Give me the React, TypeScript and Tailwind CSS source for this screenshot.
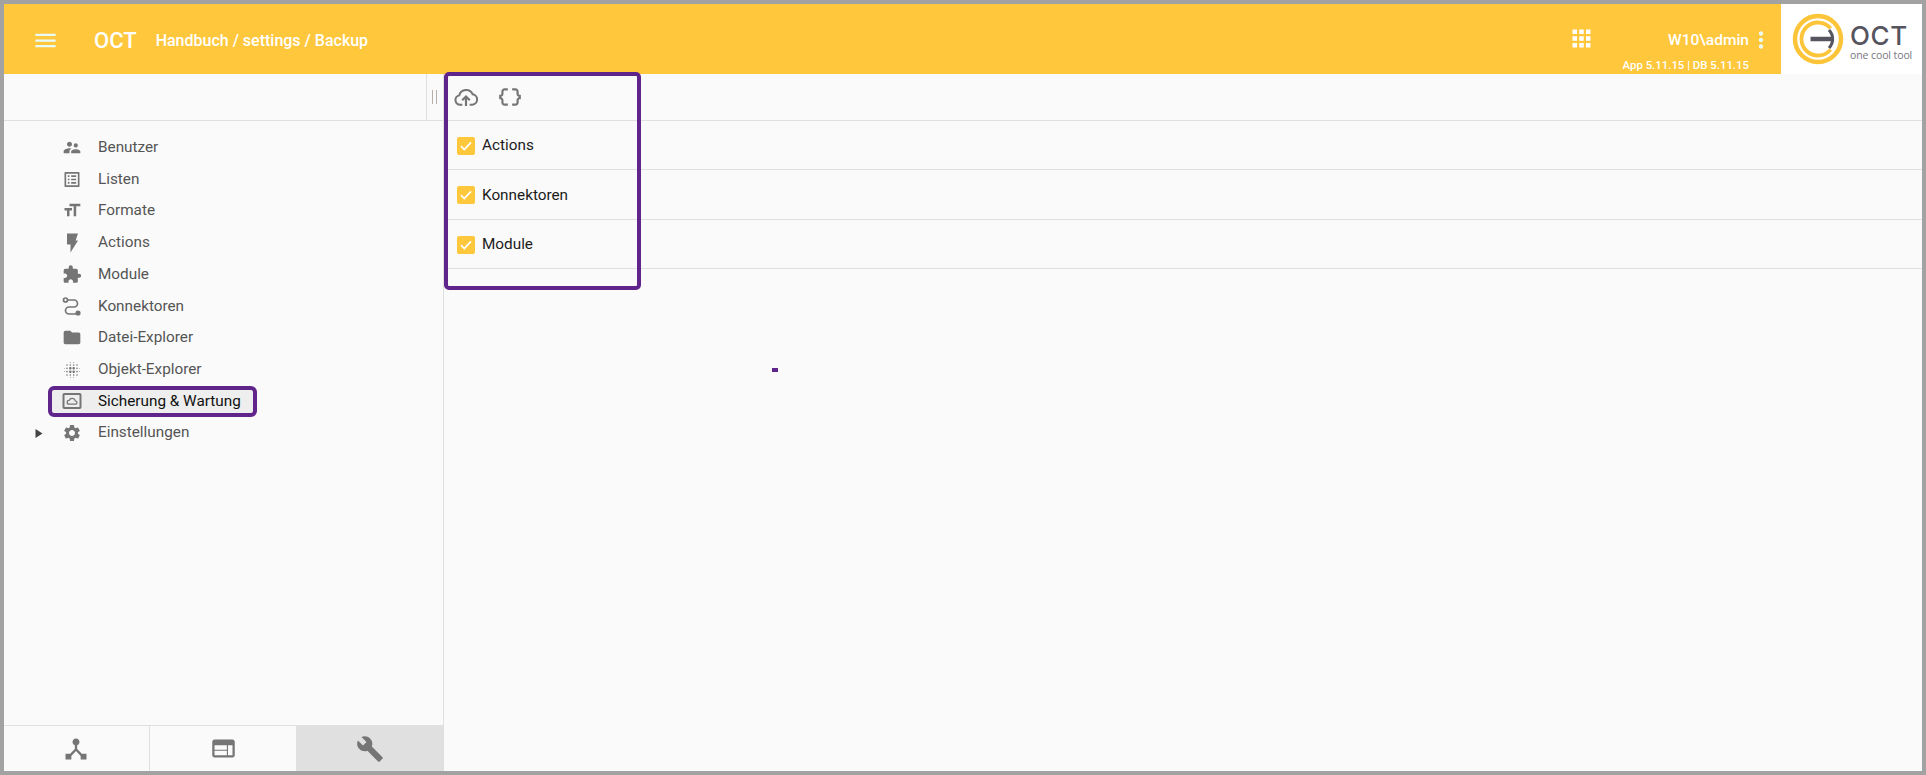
import React from "react";
import {
  MdMenu, MdApps, MdMoreVert, MdSupervisorAccount, MdOutlineListAlt, MdFormatSize, MdExtension,
  MdFolder, MdBlurOn, MdSettings, MdDeviceHub, MdWeb, MdBuild, MdDataObject,
} from "react-icons/md";

function BackupIcon() {
  return (
    <svg width="20" height="20" viewBox="0 0 20 20" fill="none" stroke="#757575">
      <rect x="1.5" y="3" width="17" height="14" rx="0.8" strokeWidth="2" />
      <path d="M7 13.2h6.2a1.7 1.7 0 0 0 .1-3.4 3.3 3.3 0 0 0-6.2-.4 1.9 1.9 0 0 0-.1 3.8z" strokeWidth="1.3" />
    </svg>
  );
}

function FlashIcon() {
  return (
    <svg width="13" height="20" viewBox="0 0 13 20" fill="#757575">
      <path d="M1 0.5H12L9.6 7.5H12L4.5 19.5V11.5H1Z" />
    </svg>
  );
}

function ConnectorIcon() {
  return (
    <svg width="20" height="19" viewBox="0 0 20 19" fill="none" stroke="#757575" strokeWidth="1.7">
      <circle cx="3.5" cy="3" r="2" />
      <path d="M5.5 3H12a3.5 3.5 0 0 1 0 7H7a3.5 3.5 0 0 0 0 7h7" />
      <circle cx="16" cy="16" r="2.6" fill="#757575" stroke="none" />
    </svg>
  );
}

function CloudUploadIcon() {
  return (
    <svg width="24" height="20" viewBox="0 0 26 22" fill="none" stroke="#757575" strokeWidth="2.2">
      <path d="M9 19.5H6.5a5.2 5.2 0 0 1-.9-10.3A7.8 7.8 0 0 1 20.3 8a5.8 5.8 0 0 1-.3 11.5H17" />
      <path d="M13 21V10.5M8.8 14.6l4.2-4.2 4.2 4.2" strokeWidth="2.4" />
    </svg>
  );
}

function Logo() {
  return (
    <div className="flex w-[141px] h-full bg-white items-center pl-[11px]">
      <svg width="52" height="52" viewBox="0 0 52 52" fill="none" className="shrink-0">
        <circle cx="26" cy="26" r="23" stroke="#fcc439" strokeWidth="4.5" />
        <path d="M38.6 15.4A16.5 16.5 0 1 0 38.6 36.6" stroke="#fcc439" strokeWidth="3.8" />
        <path d="M18.5 26H42" stroke="#55545f" strokeWidth="4.5" />
        <path d="M37 17a13 13 0 0 1 0 18" stroke="#55545f" strokeWidth="3" />
      </svg>
      <div className="ml-[6px] mt-[5px] flex flex-col items-start">
        <span className="font-['Inter',sans-serif] text-[26px] leading-[27px] tracking-[0.6px] font-medium text-[#55545f]">OCT</span>
        <span className="mt-[1px] font-['Open_Sans',sans-serif] text-[10.5px] leading-[11px] whitespace-nowrap tracking-[-0.1px] text-[#777680]">one cool tool</span>
      </div>
    </div>
  );
}

const items: { label: string; icon: React.ReactNode; active?: boolean; arrow?: boolean }[] = [
  { label: "Benutzer", icon: <MdSupervisorAccount size={25} /> },
  { label: "Listen", icon: <MdOutlineListAlt size={25} /> },
  { label: "Formate", icon: <MdFormatSize size={29} /> },
  { label: "Actions", icon: <FlashIcon /> },
  { label: "Module", icon: <MdExtension size={27} /> },
  { label: "Konnektoren", icon: <ConnectorIcon /> },
  { label: "Datei-Explorer", icon: <MdFolder size={27} /> },
  { label: "Objekt-Explorer", icon: <MdBlurOn size={26} /> },
  { label: "Sicherung & Wartung", icon: <BackupIcon />, active: true },
  { label: "Einstellungen", icon: <MdSettings size={28} />, arrow: true },
];

function SideItem({ label, icon, active, arrow }: (typeof items)[number]) {
  return (
    <div
      className={
        active
          ? "relative flex items-center h-[31.75px] ml-[44px] w-[209px] pl-[10px] border-[4px] border-[#5f258a] rounded-[6px] bg-[#eeeeee] text-[#111111]"
          : "relative flex items-center h-[31.75px] ml-[44px] pl-[14px] text-[#555555]"
      }
    >
      {arrow && (
        <svg width="8" height="9" viewBox="0 0 8 9" fill="#444444" className="absolute left-[-13px]">
          <path d="M0.5 0 7.5 4.5 0.5 9Z" />
        </svg>
      )}
      <span className="w-[20px] h-[24px] flex items-center justify-center shrink-0 text-[#757575]">{icon}</span>
      <span className={arrow ? "ml-[16px] -mt-[1px] text-[15.3px] whitespace-nowrap" : "ml-[16px] text-[15.3px] whitespace-nowrap"}>{label}</span>
    </div>
  );
}

function CheckRow({ label, h }: { label: string; h: string }) {
  return (
    <div className={`flex items-center ${h} border-b border-[#e0e0e0] pl-[13px] pt-[1px]`}>
      <span className="w-[18px] h-[18px] rounded-[2px] bg-[#ffc73c] flex items-center justify-center">
        <svg width="12" height="10" viewBox="0 0 12 10" fill="none" stroke="#ffffff" strokeWidth="1.7">
          <path d="M1 5.2 4.3 8.5 11 1.3" />
        </svg>
      </span>
      <span className="ml-[7px] text-[15.3px] text-[#1c1c1c]">{label}</span>
    </div>
  );
}

export default function App() {
  return (
    <div className="w-[1926px] h-[775px] box-border border-4 border-[#a2a2a2] bg-[#fafafa] flex flex-col font-['Roboto',sans-serif] overflow-hidden">
      <header className="h-[70px] shrink-0 bg-[#ffc73c] flex items-center text-white">
        <MdMenu size={27} className="ml-[28px] mt-[2px] text-[#e9fbf7]" />
        <span className="ml-[35px] mt-[3px] text-[22px] font-medium leading-none">OCT</span>
        <span className="ml-[19px] mt-[3px] text-[16px] font-medium whitespace-nowrap">Handbuch / settings / Backup</span>
        <div className="flex-1" />
        <MdApps size={27} className="mr-[22px] -mt-[1px]" />
        <div className="flex flex-col items-end self-start pt-[25px] w-[132px] mr-[32px] relative">
          <span className="text-[15.5px] leading-[22px] font-medium whitespace-nowrap">W10\admin</span>
          <MdMoreVert size={26} className="absolute right-[-25px] top-[23px] text-[#e9fbf7]" />
          <span className="mt-[7px] text-[11.4px] leading-[14px] font-medium whitespace-nowrap">App 5.11.15 | DB 5.11.15</span>
        </div>
        <Logo />
      </header>

      <div className="relative flex-1 flex min-h-0">
        <aside className="w-[440px] shrink-0 border-r border-[#e0e0e0] flex flex-col">
          <div className="h-[47px] shrink-0 border-b border-[#e0e0e0] flex items-center pl-[422px]">
            <div className="w-px h-full bg-[#e0e0e0]" />
            <div className="ml-[5px] w-[5px] h-[14px] border-x-[1.5px] border-[#b8b0a8]" />
          </div>
          <nav className="flex-1 pt-[10.5px]">
            {items.map((it) => (
              <SideItem key={it.label} {...it} />
            ))}
          </nav>
          <div className="h-[46px] shrink-0 border-t border-[#e0e0e0] flex text-[#757575]">
            <div className="w-[146px] border-r border-[#e0e0e0] flex items-center justify-center">
              <MdDeviceHub size={28} className="mr-[2px]" />
            </div>
            <div className="w-[146px] flex items-center justify-center">
              <MdWeb size={27} />
            </div>
            <div className="flex-1 bg-[#e0e0e0] flex items-center justify-center">
              <MdBuild size={28} />
            </div>
          </div>
        </aside>

        <main className="flex-1 min-w-0">
          <div className="h-[47px] border-b border-[#e0e0e0] flex items-center text-[#757575] pl-[10px]">
            <CloudUploadIcon />
            <MdDataObject size={26} className="ml-[19px]" />
          </div>
          <CheckRow label="Actions" h="h-[49px]" />
          <CheckRow label="Konnektoren" h="h-[50px]" />
          <CheckRow label="Module" h="h-[49px]" />
        </main>

        <div className="absolute left-[440px] top-[-2px] w-[197px] h-[218px] border-4 border-[#5f258a] rounded-[5px] pointer-events-none" />
        <div className="absolute left-[768px] top-[294px] w-[6px] h-[4px] bg-[#5f258a]" />
      </div>
    </div>
  );
}
